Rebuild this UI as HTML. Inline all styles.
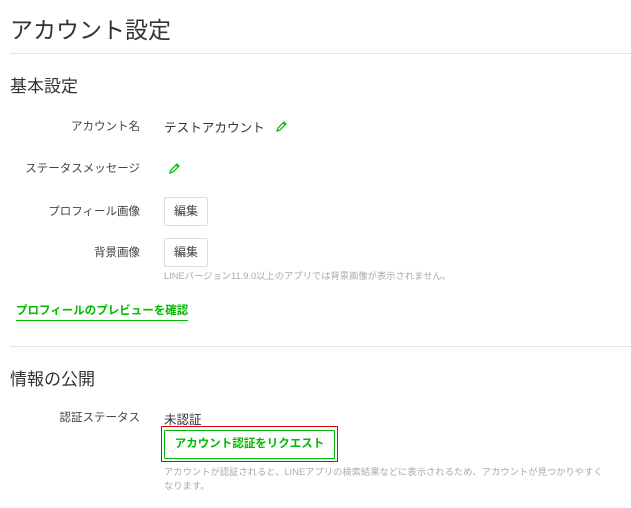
<!DOCTYPE html>
<html><head><meta charset="utf-8"><style>
body{margin:0;width:631px;height:508px;background:#fff;font-family:"Liberation Sans","Noto Sans CJK JP",sans-serif;color:#333;position:relative;overflow:hidden}
.a{position:absolute;white-space:nowrap}
.lbl{position:absolute;right:491px;font-size:11.5px;color:#444;white-space:nowrap}
.hr{position:absolute;left:10px;right:0;height:1px;background:#e3e3e3}
.btn{position:absolute;left:164px;width:42px;height:27px;border:1px solid #ddd;border-radius:2px;font-size:12px;line-height:27px;text-align:center;color:#444}
.note{font-size:9.3px;color:#aaa}
</style></head><body>
<div class="a" style="left:10px;top:11px;font-size:23px;color:#333">アカウント設定</div>
<div class="hr" style="top:53px"></div>
<div class="a" style="left:10px;top:72px;font-size:17px">基本設定</div>
<div class="lbl" style="top:118px">アカウント名</div>
<div class="a" style="left:164px;top:117px;font-size:12.6px">テストアカウント</div>
<svg class="a" style="left:275px;top:120px" width="13" height="13" viewBox="0 0 13 13"><path d="M2 11 L3 8 L9 2 L11 4 L5 10 Z M8 3 L10 5" fill="none" stroke="#00b900" stroke-width="1.2"/></svg>
<div class="lbl" style="top:160px">ステータスメッセージ</div>
<svg class="a" style="left:168px;top:162px" width="13" height="13" viewBox="0 0 13 13"><path d="M2 11 L3 8 L9 2 L11 4 L5 10 Z M8 3 L10 5" fill="none" stroke="#00b900" stroke-width="1.2"/></svg>
<div class="lbl" style="top:203px">プロフィール画像</div>
<div class="btn" style="top:197px">編集</div>
<div class="lbl" style="top:244px">背景画像</div>
<div class="btn" style="top:238px">編集</div>
<div class="a note" style="left:164px;top:268px">LINEバージョン11.9.0以上のアプリでは背景画像が表示されません。</div>
<div class="a" style="left:16px;top:302px;font-size:11.5px;font-weight:bold;color:#00b900;border-bottom:1px solid #00b900;padding-bottom:2px">プロフィールのプレビューを確認</div>
<div class="hr" style="top:346px"></div>
<div class="a" style="left:10px;top:365px;font-size:17px">情報の公開</div>
<div class="lbl" style="top:409px">認証ステータス</div>
<div class="a" style="left:164px;top:409px;font-size:12.5px">未認証</div>
<div class="a" style="left:161px;top:426px;width:175px;height:34px;border:1px solid #e60012"></div>
<div class="a" style="left:164px;top:430px;width:169px;height:27px;border:1px solid #00b900;border-radius:1px;font-size:11.5px;font-weight:bold;color:#00b900;line-height:27px;text-align:center">アカウント認証をリクエスト</div>
<div class="a note" style="left:164px;top:464px">アカウントが認証されると、LINEアプリの検索結果などに表示されるため、アカウントが見つかりやすく</div>
<div class="a note" style="left:164px;top:478px">なります。</div>
</body></html>
